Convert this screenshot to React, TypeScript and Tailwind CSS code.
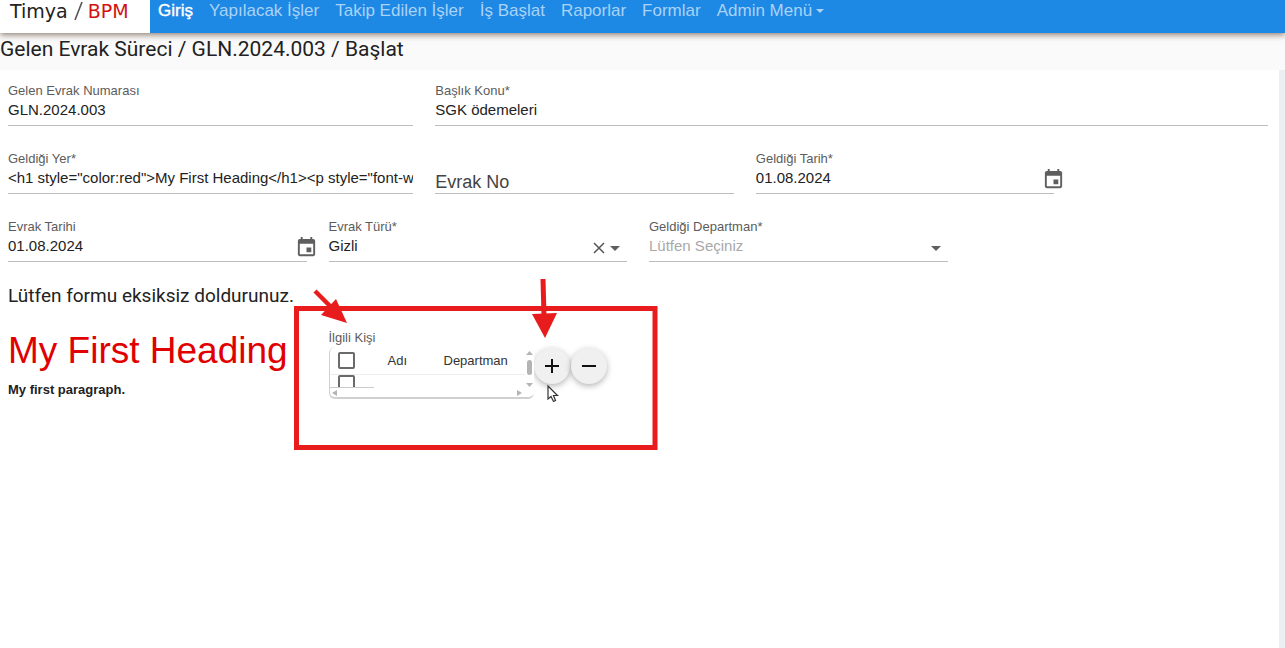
import { useState, type ReactNode } from "react";

const navLinks = ["Yapılacak İşler", "Takip Edilen İşler", "İş Başlat", "Raporlar", "Formlar"];

const label = "block whitespace-nowrap text-[13px] leading-[18px] text-[#5c5c5c]";
const value =
  "block h-5 w-full min-w-0 appearance-none bg-transparent p-0 text-[15px] leading-5 text-[#222] outline-none";

function Field({
  id,
  title,
  className,
  children,
}: {
  id: string;
  title: string;
  className: string;
  children: ReactNode;
}) {
  return (
    <div className={`relative h-[44px] border-b border-[#bdbdbd] ${className}`}>
      <label htmlFor={id} className={label}>
        {title}
      </label>
      {children}
    </div>
  );
}

function CalendarButton({ title }: { title: string }) {
  return (
    <button type="button" aria-label={title} className="absolute -right-3 bottom-0.5 size-6 text-[#5f5f5f]">
      <svg viewBox="0 0 24 24" fill="currentColor" className="size-[23px]">
        <path d="M17 12h-5v5h5v-5zM16 1v2H8V1H6v2H5c-1.11 0-1.99.9-1.99 2L3 19c0 1.1.89 2 2 2h14c1.1 0 2-.9 2-2V5c0-1.1-.9-2-2-2h-1V1h-2zm3 18H5V8h14v11z" />
      </svg>
    </button>
  );
}

function DropArrow() {
  return (
    <svg viewBox="0 0 10 5" fill="#5f5f5f" className="pointer-events-none absolute right-[7px] bottom-2.5 h-[5px] w-[10px]">
      <path d="M0 0h10L5 5z" />
    </svg>
  );
}

function Header() {
  return (
    <header className="relative z-10 flex h-[33px] bg-[#1e88e5] shadow-[0_2px_6px_rgba(60,30,10,0.55)]">
      <a
        href="#"
        className="flex w-[150px] shrink-0 items-start bg-white pl-2.5 font-['DejaVu_Sans',sans-serif] text-[19px] leading-[22px] text-[#222]"
      >
        <span>Timya</span>
        <svg viewBox="0 0 12 20" className="mx-1 mt-0.5 h-5 w-3" fill="none" stroke="#555" strokeWidth="1.6">
          <path d="M3 18L10 0" />
        </svg>
        <span className="text-[#d31212]">BPM</span>
      </a>
      <nav className="flex items-start gap-4 pl-2 font-['Liberation_Sans',Arial,sans-serif] text-[17px] leading-[22px] whitespace-nowrap text-[#a9d3f7]">
        <a href="#" className="text-white [-webkit-text-stroke:0.4px_white]">
          Giriş
        </a>
        {navLinks.map((text) => (
          <a key={text} href="#">
            {text}
          </a>
        ))}
        <button type="button" className="flex items-center gap-1">
          Admin Menü
          <svg viewBox="0 0 8 4" fill="currentColor" className="h-1 w-2">
            <path d="M0 0h8L4 4z" />
          </svg>
        </button>
      </nav>
    </header>
  );
}

function Check({ title }: { title: string }) {
  return (
    <input
      type="checkbox"
      aria-label={title}
      className="block size-[17px] appearance-none rounded-[2px] border-2 border-[#6a6a6a] bg-white checked:bg-[#1e88e5]"
    />
  );
}

function PeopleTable() {
  return (
    <div className="relative h-[52px] w-[205px] overflow-hidden rounded-md border-b-2 border-l border-[#d0d0d0] bg-white">
      <div className="h-[41px] w-[195px] overflow-hidden">
        <table className="w-full table-fixed border-collapse text-left text-[13px] text-[#333]">
          <thead>
            <tr className="h-[27px] border-b border-[#eeeeee]">
              <th className="w-[58px] pl-2">
                <Check title="Tümünü seç" />
              </th>
              <th className="w-[56px] font-normal">Adı</th>
              <th className="font-normal">Departman</th>
            </tr>
          </thead>
          <tbody>
            <tr className="h-5">
              <td className="pl-2 align-top">
                <Check title="Satırı seç" />
              </td>
              <td />
              <td />
            </tr>
          </tbody>
        </table>
      </div>
      <svg viewBox="0 0 205 52" fill="#b4b4b4" className="pointer-events-none absolute top-0 left-0 h-[52px] w-[205px]">
        <path d="M0 40.500h44" stroke="#ccc" />
        <path d="M196 8h7l-3.500-4z" />
        <rect x="197" y="13" width="5" height="15" rx="2.500" />
        <path d="M196 36h7l-3.500 4z" />
        <path d="M7 43v6l-5-3z" />
        <path d="M187 43v6l5-3z" />
      </svg>
    </div>
  );
}

const roundButton =
  "flex size-9 items-center justify-center rounded-full bg-[#f0f0f0] shadow-[0_2px_6px_rgba(0,0,0,0.3)]";

function Annotations() {
  return (
    <svg
      viewBox="0 0 370 180"
      className="pointer-events-none absolute -top-2 -left-[37px] h-[180px] w-[370px]"
      fill="#e81c1c"
      stroke="none"
    >
      <rect x="4.500" y="30.500" width="358.500" height="139" fill="none" stroke="#e81c1c" strokeWidth="5" />
      <path d="M23 13L46 36" stroke="#e81c1c" strokeWidth="4.500" />
      <path d="M55 45L29 37L44 21z" />
      <path d="M251 1L252 38" stroke="#e81c1c" strokeWidth="5" />
      <path d="M253 60L240 36L265 35z" />
      <path
        d="M256 108v13l3-2.500 2.500 5 2-1-2-5h4z"
        fill="#fff"
        stroke="#333"
        strokeWidth="1.200"
      />
    </svg>
  );
}

export default function App() {
  const [type, setType] = useState("Gizli");

  return (
    <div className="flex min-h-screen flex-col overflow-hidden bg-white font-[Roboto,sans-serif]">
      <Header />
      <h1 className="h-[37px] bg-[#fafafa] text-[21px] leading-8 whitespace-nowrap text-[#222]">
        Gelen Evrak Süreci / GLN.2024.003 / Başlat
      </h1>
      <main className="grow border-r-[6px] border-[#eceff1] pt-3 pr-[11px] pl-2">
        <form className="grid grid-cols-12 gap-x-[22px] gap-y-6 font-['Liberation_Sans',Arial,sans-serif]">
          <Field id="number" title="Gelen Evrak Numarası" className="col-span-4">
            <input id="number" className={value} defaultValue="GLN.2024.003" />
          </Field>
          <Field id="subject" title="Başlık Konu*" className="col-span-8">
            <input id="subject" className={value} defaultValue="SGK ödemeleri" />
          </Field>

          <Field id="place" title="Geldiği Yer*" className="col-span-4">
            <input
              id="place"
              className={value}
              defaultValue={'<h1 style="color:red">My First Heading</h1><p style="font-weight:bold">My first paragraph.</p>'}
            />
          </Field>
          <div className="relative col-span-3 flex h-[44px] items-end border-b border-[#bdbdbd]">
            <input
              id="docno"
              aria-label="Evrak No"
              placeholder="Evrak No"
              className="block h-[22px] w-full bg-transparent text-[18px] leading-[22px] text-[#222] outline-none placeholder:text-[#444]"
            />
          </div>
          <Field id="arrival" title="Geldiği Tarih*" className="col-span-3">
            <input id="arrival" className={value} defaultValue="01.08.2024" />
            <CalendarButton title="Geldiği tarihi seç" />
          </Field>

          <Field id="docdate" title="Evrak Tarihi" className="col-span-3 col-start-1">
            <input id="docdate" className={value} defaultValue="01.08.2024" />
            <CalendarButton title="Evrak tarihini seç" />
          </Field>
          <Field id="doctype" title="Evrak Türü*" className="col-span-3">
            <select id="doctype" className={value} value={type} onChange={(e) => setType(e.target.value)}>
              <option value="" />
              <option>Gizli</option>
            </select>
            <button
              type="button"
              aria-label="Temizle"
              onClick={() => setType("")}
              className="absolute right-[22px] bottom-[7px] text-[#555]"
            >
              <svg viewBox="0 0 12 12" fill="none" stroke="currentColor" strokeWidth="1.500" className="size-3">
                <path d="M1 1L11 11M11 1L1 11" />
              </svg>
            </button>
            <DropArrow />
          </Field>
          <Field id="department" title="Geldiği Departman*" className="col-span-3">
            <select id="department" className={`${value} text-[#a8a8a8]!`}>
              <option>Lütfen Seçiniz</option>
            </select>
            <DropArrow />
          </Field>

          <section className="col-span-3 col-start-1 whitespace-nowrap text-[#222]">
            <p className="font-[Roboto,sans-serif] text-[19px] leading-5">Lütfen formu eksiksiz doldurunuz.</p>
            <h2 className="mt-6 text-[37px] leading-[42px] text-[#e00000]">My First Heading</h2>
            <p className="mt-2 text-[13px] leading-5 font-bold">My first paragraph.</p>
          </section>
          <section className="relative col-span-3 pt-[43px]">
            <h3 className={label}>İlgili Kişi</h3>
            <div className="flex">
              <PeopleTable />
              <div className="flex gap-px pt-px">
                <button type="button" aria-label="Ekle" className={roundButton}>
                  <svg viewBox="0 0 14 14" stroke="#111" strokeWidth="2" className="size-3.5">
                    <path d="M7 0v14M0 7h14" />
                  </svg>
                </button>
                <button type="button" aria-label="Çıkar" className={roundButton}>
                  <svg viewBox="0 0 14 14" stroke="#111" strokeWidth="2" className="size-3.5">
                    <path d="M0 7h14" />
                  </svg>
                </button>
              </div>
            </div>
            <Annotations />
          </section>
        </form>
      </main>
    </div>
  );
}
